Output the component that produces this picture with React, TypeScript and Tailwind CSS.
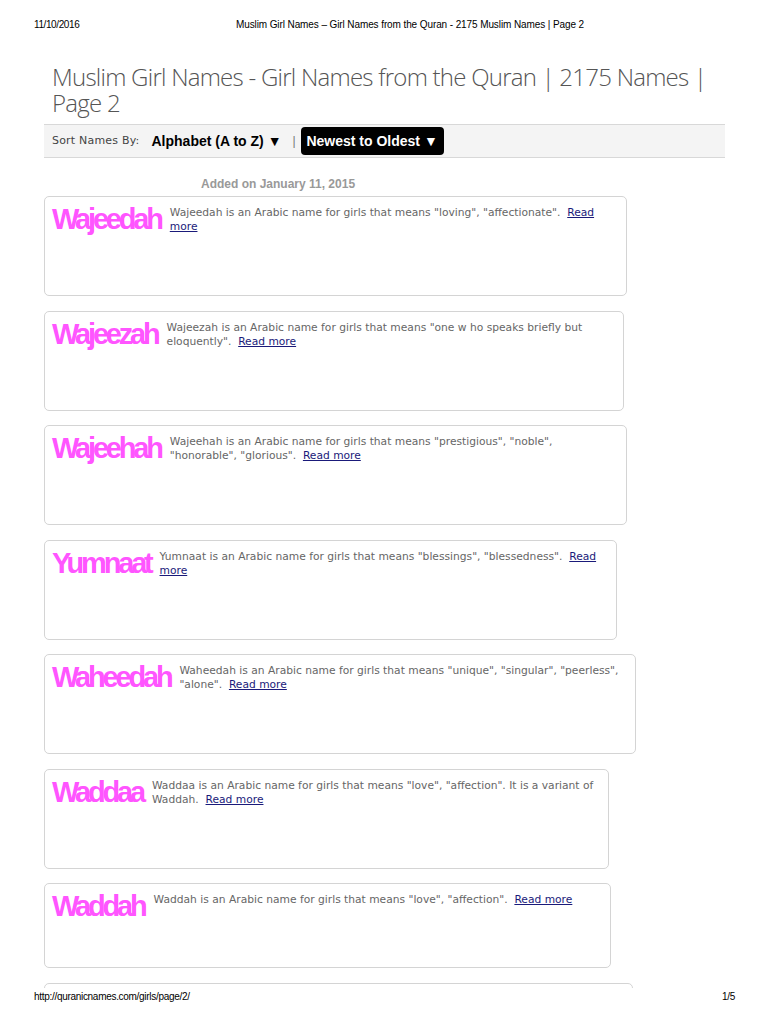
const names = [
    {
        name: "Wajeedah",
        text: 'Wajeedah is an Arabic name for girls that means "loving", "affectionate".',
        height: "h-[100px]"
    },
    {
        name: "Wajeezah",
        text: 'Wajeezah is an Arabic name for girls that means "one w ho speaks briefly but eloquently".',
        height: "h-[100px]"
    },
    {
        name: "Wajeehah",
        text: 'Wajeehah is an Arabic name for girls that means "prestigious", "noble", "honorable", "glorious".',
        height: "h-[100px]"
    },
    {
        name: "Yumnaat",
        text: 'Yumnaat is an Arabic name for girls that means "blessings", "blessedness".',
        height: "h-[100px]"
    },
    {
        name: "Waheedah",
        text: 'Waheedah is an Arabic name for girls that means "unique", "singular", "peerless", "alone".',
        height: "h-[100px]"
    },
    {
        name: "Waddaa",
        text: 'Waddaa is an Arabic name for girls that means "love", "affection". It is a variant of Waddah.',
        height: "h-[100px]"
    },
    {
        name: "Waddah",
        text: 'Waddah is an Arabic name for girls that means "love", "affection".',
        height: "h-[85px]"
    }
];

function NameCard({ name, text, height }: { name: string; text: string; height: string }) {
    return (
        <div className={`inline-flex items-start ${height} border border-[#d4d4d4] rounded-[5px] bg-white pl-[7px] pr-[6px] pt-[6px]`}>
            <div className="font-['Liberation_Sans',Arial,sans-serif] font-bold text-[29px] leading-[32px] tracking-[-0.11em] text-[#ff55ff] pr-[9px] whitespace-nowrap">
                {name}
            </div>
            <p className="w-[450px] font-['DejaVu_Sans',Verdana,sans-serif] text-[10.7px] leading-[14px] text-[#666] pt-[3px]">
                {text}{" "}&nbsp;
                <a href="#" className="text-[#1a1a7a] underline">Read more</a>
            </p>
        </div>
    );
}

export default function App() {
    return (
        <div className="w-[768px] h-[1024px] bg-white flex flex-col font-['Liberation_Sans',Arial,sans-serif] text-black overflow-hidden">
            {/* print header */}
            <div className="relative h-[50px] shrink-0 text-[10px] leading-none">
                <span className="absolute left-[34px] top-[20px] tracking-[-0.4px]">11/10/2016</span>
                <div className="pt-[20px] pl-[52px] text-center tracking-[-0.1px]">
                    Muslim Girl Names – Girl Names from the Quran - 2175 Muslim Names | Page 2
                </div>
            </div>

            {/* page content */}
            <div className="h-[938px] shrink-0 overflow-hidden pl-[44px] pr-[43px]">
                <h1 className="px-[8px] pt-[14px] font-['Open_Sans',sans-serif] font-light text-[24px] leading-[26px] text-[#555] tracking-[-0.75px]">
                    Muslim Girl Names - Girl Names from the Quran | 2175 Names | Page 2
                </h1>

                <div className="mt-[8px] h-[34px] flex items-center border-y border-[#d8d8d8] bg-[#f4f4f4] px-[8px]">
                    <span className="font-['DejaVu_Sans',Verdana,sans-serif] text-[11px] tracking-[0.2px] text-[#444]">Sort Names By:</span>
                    <span className="ml-[12px] font-bold text-[14px] text-black">Alphabet (A to Z) ▼</span>
                    <span className="ml-[11px] text-[12px] text-[#777]">|</span>
                    <span className="ml-[5px] h-[28px] w-[143px] flex items-center justify-center rounded-[4px] bg-black font-bold text-[14px] text-white">
                        Newest to Oldest ▼
                    </span>
                </div>

                <div className="mt-[19px] pl-[157px] font-bold text-[12px] leading-[14px] text-[#999]">
                    Added on January 11, 2015
                </div>

                <div className="mt-[5px] flex flex-col items-start gap-[14.5px]">
                    {names.map((item) => (
                        <NameCard key={item.name} {...item} />
                    ))}
                    <div className="w-[589px] h-[100px] border border-[#d4d4d4] rounded-[5px] bg-white"></div>
                </div>
            </div>

            {/* print footer */}
            <div className="relative flex-1 text-[10px] leading-none tracking-[-0.3px]">
                <span className="absolute left-[34px] top-[4px]">http://quranicnames.com/girls/page/2/</span>
                <span className="absolute left-[722px] top-[4px]">1/5</span>
            </div>
        </div>
    );
}
